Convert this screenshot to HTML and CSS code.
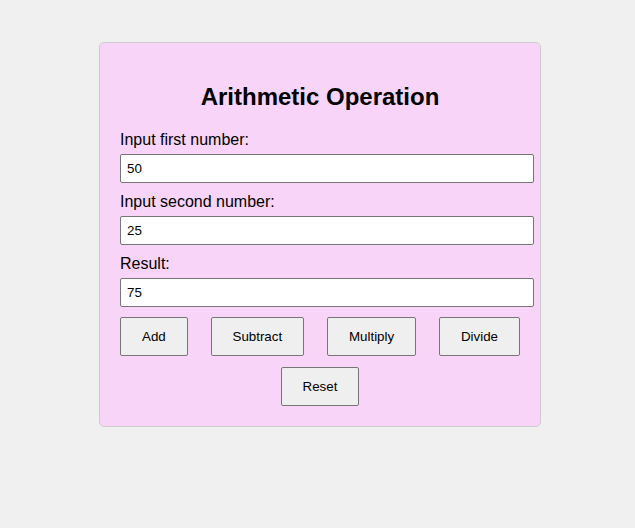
FILE: index.html
```html
<!DOCTYPE html>
<html>
<head>
<meta charset="utf-8">
<link rel="stylesheet" href="styles.css">
</head>
<body>
<div class="card">
  <h2 class="title">Arithmetic Operation</h2>
  <label class="label">Input first number:</label>
  <input class="field" type="text" value="50">
  <label class="label">Input second number:</label>
  <input class="field" type="text" value="25">
  <label class="label">Result:</label>
  <input class="field" type="text" value="75">
  <div class="ops">
    <button class="btn">Add</button>
    <button class="btn">Subtract</button>
    <button class="btn">Multiply</button>
    <button class="btn">Divide</button>
  </div>
  <div class="reset-row">
    <button class="btn">Reset</button>
  </div>
</div>
</body>
</html>
```
FILE: styles.css
```css
html, body {
  background: #f0f0f0;
}
body {
  margin: 0;
  padding: 42px 0 0 5px;
  font-family: "Liberation Sans", Arial, sans-serif;
  color: #000;
}
.card {
  width: 400px;
  margin: 0 auto;
  padding: 20px;
  background: #f8d5f8;
  border: 1px solid #cccccc;
  border-radius: 5px;
}
.title {
  margin: 20px 0;
  font-size: 24px;
  font-weight: bold;
  text-align: center;
}
.label {
  display: block;
  font-size: 16px;
  margin-bottom: 5px;
}
.field {
  display: block;
  width: 100%;
  margin: 0 0 10px 0;
  padding: 6px;
  border: 1px solid #767676;
  border-radius: 2px;
  background: #fff;
  font-family: "Liberation Sans", Arial, sans-serif;
  font-size: 13.333px;
  line-height: 15px;
  color: #000;
}
.ops {
  display: flex;
  justify-content: space-between;
}
.reset-row {
  display: flex;
  justify-content: center;
  margin-top: 11px;
}
.btn {
  padding: 10px 21px;
  border: 1px solid #767676;
  border-radius: 2px;
  background: #efefef;
  font-family: "Liberation Sans", Arial, sans-serif;
  font-size: 13.333px;
  line-height: 17px;
  color: #000;
}
```
